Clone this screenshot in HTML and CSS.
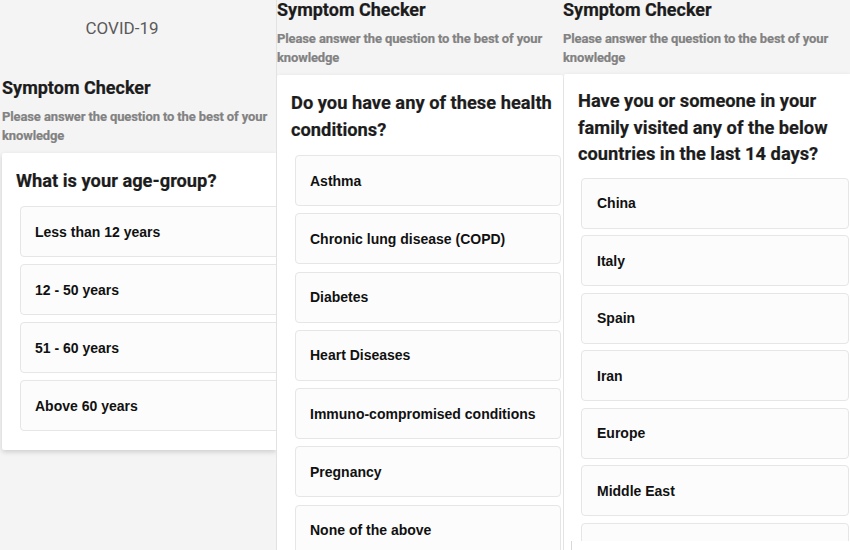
FILE: index.html
```html
<!DOCTYPE html>
<html lang="en">
<head>
<meta charset="utf-8">
<title>COVID-19 Symptom Checker</title>
<link rel="stylesheet" href="styles.css">
</head>
<body>
<div class="collage">
  <section class="phone phone-one">
    <header class="appbar">COVID-19</header>
    <div class="intro">
      <h1 class="title">Symptom Checker</h1>
      <p class="subtitle">Please answer the question to the best of your knowledge</p>
    </div>
    <div class="card">
      <h2 class="question">What is your age-group?</h2>
      <ul class="options">
        <li class="option">Less than 12 years</li>
        <li class="option">12 - 50 years</li>
        <li class="option">51 - 60 years</li>
        <li class="option">Above 60 years</li>
      </ul>
    </div>
  </section>

  <section class="phone phone-two">
    <div class="intro">
      <h1 class="title">Symptom Checker</h1>
      <p class="subtitle">Please answer the question to the best of your knowledge</p>
    </div>
    <div class="card">
      <h2 class="question">Do you have any of these health conditions?</h2>
      <ul class="options">
        <li class="option">Asthma</li>
        <li class="option">Chronic lung disease (COPD)</li>
        <li class="option">Diabetes</li>
        <li class="option">Heart Diseases</li>
        <li class="option">Immuno-compromised conditions</li>
        <li class="option">Pregnancy</li>
        <li class="option">None of the above</li>
      </ul>
    </div>
  </section>

  <section class="phone phone-three">
    <div class="intro">
      <h1 class="title">Symptom Checker</h1>
      <p class="subtitle">Please answer the question to the best of your knowledge</p>
    </div>
    <div class="card">
      <h2 class="question">Have you or someone in your family visited any of the below countries in the last 14 days?</h2>
      <ul class="options">
        <li class="option">China</li>
        <li class="option">Italy</li>
        <li class="option">Spain</li>
        <li class="option">Iran</li>
        <li class="option">Europe</li>
        <li class="option">Middle East</li>
        <li class="option">Southeast Asia</li>
      </ul>
    </div>
    <div class="bottom-sheet"></div>
  </section>
</div>
</body>
</html>
```

FILE: styles.css
```css
* { box-sizing: border-box; }

html, body {
  margin: 0;
  padding: 0;
  background: #f4f4f4;
}

body {
  font-family: Roboto, "Liberation Sans", Arial, sans-serif;
  color: #212121;
}

.collage {
  display: flex;
  width: 850px;
  height: 550px;
  overflow: hidden;
}

.phone {
  position: relative;
  height: 550px;
  overflow: hidden;
  background: #f4f4f4;
  flex: none;
}

.phone-one { width: 276px; }
.phone-two { width: 287px; border-left: 1px solid #e2e2e2; }
.phone-three { width: 287px; }

.appbar {
  height: 56px;
  line-height: 56px;
  padding-right: 32px;
  text-align: center;
  font-size: 17px;
  font-weight: 400;
  color: #5a5a5a;
}

.intro { padding: 0 0 0 2px; }

.title {
  margin: 0;
  font-size: 18px;
  line-height: 24px;
  font-weight: 700;
  color: #1c1c1c;
  -webkit-text-stroke: 0.2px #1c1c1c;
}

.subtitle {
  margin: 7px 0 0;
  font-size: 13px;
  line-height: 19px;
  font-weight: 700;
  letter-spacing: -0.12px;
  color: #828282;
  -webkit-text-stroke: 0.2px #828282;
}

.phone-one .intro { padding-top: 20px; padding-bottom: 8px; }
.phone-two .intro { padding-top: 0; margin-top: -2px; padding-bottom: 8px; padding-left: 0; }
.phone-three .intro { padding-top: 0; margin-top: -2px; padding-bottom: 7px; padding-left: 0; }

.card {
  background: #ffffff;
  margin-left: 2px;
  padding: 14px 0 19px 0;
  box-shadow: 0 2px 5px rgba(0, 0, 0, 0.16);
  border-radius: 2px 0 0 2px;
}

.phone-two .card { margin-left: 0; padding-right: 2px; border-radius: 2px; }
.phone-three .card { margin-left: 1px; }

.question {
  margin: 0 0 12px;
  padding: 0 4px 0 14px;
  font-size: 18.3px;
  line-height: 27px;
  font-weight: 700;
  color: #1c1c1c;
  -webkit-text-stroke: 0.2px #1c1c1c;
}

.phone-three .question { line-height: 26.5px; margin-bottom: 10px; }

.options {
  list-style: none;
  margin: 0;
  padding: 0 0 0 18px;
  display: flex;
  flex-direction: column;
  gap: 7px;
}

.phone-one .options { margin-right: -10px; }
.phone-two .options { gap: 7.3px; }
.phone-three .options { padding-left: 17px; padding-right: 1px; gap: 6.6px; }

.option {
  height: 51px;
  display: flex;
  align-items: center;
  padding-left: 14px;
  background: #fcfcfc;
  border: 1px solid #e6e6e6;
  border-radius: 4px;
  font-family: "Liberation Sans", Arial, sans-serif;
  font-size: 14px;
  font-weight: 700;
  color: #111111;
}

.phone-three .option { padding-left: 15px; }

.bottom-sheet {
  position: absolute;
  left: 8px;
  right: 0;
  bottom: 0;
  height: 9px;
  background: #ffffff;
  border-left: 1px solid #d8d8d8;
}
```
